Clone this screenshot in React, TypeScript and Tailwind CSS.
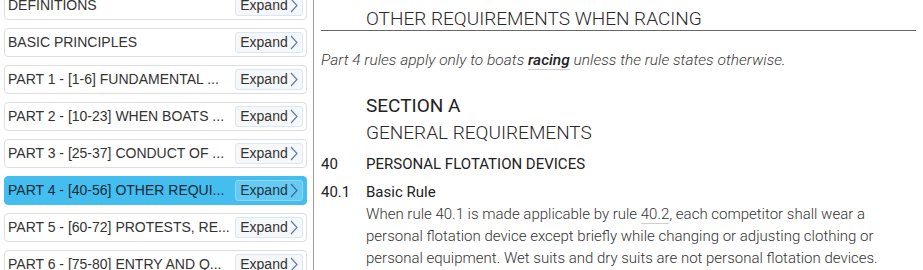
import React from "react";

const items = [
  "DEFINITIONS",
  "BASIC PRINCIPLES",
  "PART 1 - [1-6] FUNDAMENTAL ...",
  "PART 2 - [10-23] WHEN BOATS ...",
  "PART 3 - [25-37] CONDUCT OF ...",
  "PART 4 - [40-56] OTHER REQUI...",
  "PART 5 - [60-72] PROTESTS, RE...",
  "PART 6 - [75-80] ENTRY AND Q...",
];

function Chevron({ color }: { color: string }) {
  return (
    <svg width="8" height="15" viewBox="0 0 8 15" className="ml-[2px]">
      <path d="M1 1 L7 7.5 L1 14" fill="none" stroke={color} strokeWidth="1.2" />
    </svg>
  );
}

function Row({ label, selected }: { label: string; selected: boolean }) {
  return (
    <div
      className={
        selected
          ? "h-[29px] shrink-0 rounded-[4px] border border-[#44bdef] bg-[#44bdef] flex items-center justify-between pl-[3px] pr-[3px]"
          : "h-[29px] shrink-0 rounded-[4px] border border-[#dedede] bg-white flex items-center justify-between pl-[3px] pr-[3px]"
      }
    >
      <span
        className={
          selected
            ? "text-[14px] text-[#172a36] whitespace-nowrap"
            : "text-[14px] text-[#333333] whitespace-nowrap"
        }
      >
        {label}
      </span>
      <div
        className={
          selected
            ? "h-[21px] w-[68px] rounded-[3px] border border-[#8ed7f6] bg-[#66caf3] flex items-center justify-center"
            : "h-[21px] w-[68px] rounded-[3px] border border-[#d8e9f6] bg-[#f5f7f9] flex items-center justify-center"
        }
      >
        <span className={selected ? "text-[14px] text-[#1d3442]" : "text-[14px] text-[#333333]"}>Expand</span>
        <Chevron color={selected ? "#3f6a95" : "#5b7fad"} />
      </div>
    </div>
  );
}

export default function App() {
  return (
    <div
      className="w-[923px] h-[270px] overflow-hidden bg-white flex"
      style={{ fontFamily: "'Liberation Sans', Arial, sans-serif" }}
    >
      <div className="w-[314px] shrink-0 border-r-[1.5px] border-[#9c9c9c] pl-[4px] pr-[6px] flex flex-col gap-[8px] mt-[-9px] h-[290px]">
        {items.map((it, i) => (
          <Row key={i} label={it} selected={i === 5} />
        ))}
      </div>
      <div
        className="flex-1 pl-[7px] pr-[7px] text-[#333333]"
        style={{ fontFamily: "Roboto, 'Liberation Sans', sans-serif" }}
      >
        <div className="pt-[7px] pl-[45px] leading-[23px] text-[19px] font-light text-[#2a2a2a] border-b-[1.5px] border-[#666666]">
          OTHER REQUIREMENTS WHEN RACING
        </div>
        <p className="mt-[18px] text-[15.5px] leading-[22px] italic font-light text-[#3a3a3a]">
          Part 4 rules apply only to boats{" "}
          <span className="font-medium text-[#222222] border-b-[1.5px] border-[#cfcfcf]">racing</span> unless the
          rule states otherwise.
        </p>
        <div className="mt-[21px] pl-[45px] text-[19px] leading-[27px] text-[#222222]">SECTION A</div>
        <div className="pl-[45px] text-[19px] leading-[27px] font-light text-[#2a2a2a]">GENERAL REQUIREMENTS</div>
        <div className="mt-[7px] grid grid-cols-[45px_1fr] text-[15px] leading-[22px] text-[#222222]">
          <span>40</span>
          <span>PERSONAL FLOTATION DEVICES</span>
        </div>
        <div className="mt-[6px] grid grid-cols-[45px_1fr] text-[15px] leading-[22px]">
          <span className="text-[#222222]">40.1</span>
          <div>
            <div className="text-[#222222]">Basic Rule</div>
            <p className="font-light text-[#333333]">
              When rule 40.1 is made applicable by rule{" "}
              <span className="border-b-[1.5px] border-[#cfcfcf]">40.2</span>, each competitor shall wear a
              personal flotation device except briefly while changing or adjusting clothing or personal
              equipment. Wet suits and dry suits are not personal flotation devices.
            </p>
          </div>
        </div>
      </div>
    </div>
  );
}
